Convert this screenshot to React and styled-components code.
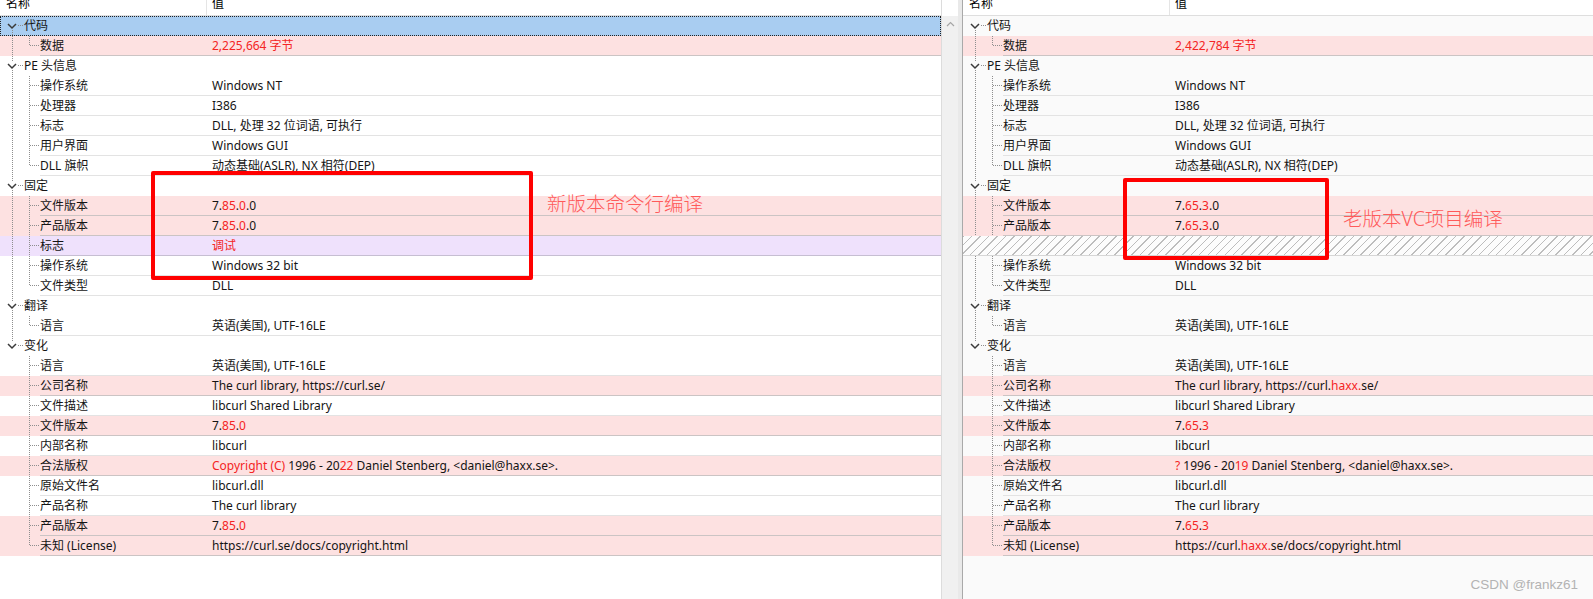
import React from 'react';
import styled, { createGlobalStyle, css } from 'styled-components';

const GlobalStyle = createGlobalStyle`
  html, body {
    margin: 0;
    padding: 0;
    background: #fff;
  }

  body {
    font-family: 'Noto Sans', 'Noto Sans CJK SC', sans-serif;
    font-size: 12px;
    color: #141414;
  }
`;

const RED = '#f42424';

const tones = {
  white: { bg: 'transparent', line: '#e3e3e3' },
  pink: { bg: '#fde1e1', line: '#cbc4c4' },
  purple: { bg: '#efe1fc', line: '#c6bed2' },
  selected: { bg: '#a9cdf1', line: 'transparent' },
};

const Screen = styled.div`
  position: relative;
  display: flex;
  width: 1593px;
  height: 599px;
  overflow: hidden;
`;

const Pane = styled.div`
  display: flex;
  flex-direction: column;
  width: ${p => (p.$width ? `${p.$width}px` : 'auto')};
  flex: ${p => (p.$width ? 'none' : 1)};
  background: ${p => p.$bg};
`;

const Header = styled.div`
  display: flex;
  height: 15px;
  border-bottom: 1px solid #dedede;
  background: #fff;
  overflow: hidden;
`;

const HeaderCell = styled.div`
  display: flex;
  align-items: flex-end;
  box-sizing: border-box;
  width: ${p => (p.$first ? '207px' : 'auto')};
  flex: ${p => (p.$first ? 'none' : 1)};
  padding: 0 0 5px ${p => (p.$first ? '6px' : '5px')};
  border-right: ${p => (p.$first ? '1px solid #e5e5e5' : 'none')};
  line-height: 12px;
  color: #000;
`;

const Row = styled.div`
  display: flex;
  height: 20px;
  background: ${p => tones[p.$tone].bg};
  ${p =>
    p.$tone === 'selected' &&
    css`
      outline: 1px dotted #222;
      outline-offset: -1px;
    `}
`;

const MissingRow = styled.div`
  box-sizing: border-box;
  height: 20px;
  border-bottom: 1px solid #d6d6d6;
  background: repeating-linear-gradient(135deg, #bdbdbd 0 1px, #fcfcfc 1px 6px);
`;

const Gutter = styled.svg`
  display: block;
  flex: none;
`;

const Body = styled.div`
  display: flex;
  flex: 1;
  box-sizing: border-box;
  height: 20px;
  line-height: 19px;
  border-bottom: 1px solid ${p => (p.$group ? 'transparent' : tones[p.$tone].line)};
  white-space: nowrap;
`;

const NameCell = styled.div`
  flex: none;
  width: ${p => p.$width}px;
`;

const ValueCell = styled.div`
  flex: 1;
  padding-left: 5px;
`;

const Hot = styled.span`
  color: ${RED};
`;

const ScrollTrack = styled.div`
  flex: none;
  width: 16px;
  border-left: 1px solid #dcdcdc;
  background: linear-gradient(#fff 0 16px, #f0f0f0 16px);
`;

const ScrollArrow = styled.svg`
  display: block;
  margin: 21px 0 0 4px;
`;

const Splitter = styled.div`
  flex: none;
  width: 4px;
  background: #e9e9e9;
  border-right: 1px solid #a9a9a9;
`;

const RedBox = styled.div`
  position: absolute;
  left: ${p => p.$left}px;
  top: ${p => p.$top}px;
  width: ${p => p.$width}px;
  height: ${p => p.$height}px;
  box-sizing: border-box;
  border: 4px solid #ff0000;
  border-radius: 2px;
`;

const Note = styled.div`
  position: absolute;
  left: ${p => p.$left}px;
  top: ${p => p.$top}px;
  font-size: 19.5px;
  line-height: 22px;
  font-weight: 300;
  color: #ff5a5a;
  white-space: nowrap;
`;

const Watermark = styled.div`
  position: absolute;
  right: 15px;
  bottom: 7px;
  font-family: 'Liberation Sans', Arial, sans-serif;
  font-size: 13.5px;
  color: #b3b3b3;
`;

const leftTree = [
  {
    label: '代码',
    selected: true,
    children: [{ name: '数据', value: '{2,225,664 字节}', tone: 'pink' }],
  },
  {
    label: 'PE 头信息',
    children: [
      { name: '操作系统', value: 'Windows NT' },
      { name: '处理器', value: 'I386' },
      { name: '标志', value: 'DLL, 处理 32 位词语, 可执行' },
      { name: '用户界面', value: 'Windows GUI' },
      { name: 'DLL 旗帜', value: '动态基础(ASLR), NX 相符(DEP)' },
    ],
  },
  {
    label: '固定',
    children: [
      { name: '文件版本', value: '7.{85}.{0}.0', tone: 'pink' },
      { name: '产品版本', value: '7.{85}.{0}.0', tone: 'pink' },
      { name: '标志', value: '{调试}', tone: 'purple' },
      { name: '操作系统', value: 'Windows 32 bit' },
      { name: '文件类型', value: 'DLL' },
    ],
  },
  {
    label: '翻译',
    children: [{ name: '语言', value: '英语(美国), UTF-16LE' }],
  },
  {
    label: '变化',
    children: [
      { name: '语言', value: '英语(美国), UTF-16LE' },
      { name: '公司名称', value: 'The curl library, https://curl.se/', tone: 'pink' },
      { name: '文件描述', value: 'libcurl Shared Library' },
      { name: '文件版本', value: '7.{85}.{0}', tone: 'pink' },
      { name: '内部名称', value: 'libcurl' },
      {
        name: '合法版权',
        value: '{Copyright (C)} 1996 - 20{22} Daniel Stenberg, <daniel@haxx.se>.',
        tone: 'pink',
      },
      { name: '原始文件名', value: 'libcurl.dll' },
      { name: '产品名称', value: 'The curl library' },
      { name: '产品版本', value: '7.{85}.{0}', tone: 'pink' },
      { name: '未知 (License)', value: 'https://curl.se/docs/copyright.html', tone: 'pink' },
    ],
  },
];

const rightTree = [
  {
    label: '代码',
    children: [{ name: '数据', value: '{2,422,784 字节}', tone: 'pink' }],
  },
  leftTree[1],
  {
    label: '固定',
    children: [
      { name: '文件版本', value: '7.{65}.{3}.0', tone: 'pink' },
      { name: '产品版本', value: '7.{65}.{3}.0', tone: 'pink' },
      { missing: true },
      { name: '操作系统', value: 'Windows 32 bit' },
      { name: '文件类型', value: 'DLL' },
    ],
  },
  leftTree[3],
  {
    label: '变化',
    children: [
      { name: '语言', value: '英语(美国), UTF-16LE' },
      { name: '公司名称', value: 'The curl library, https://curl.{haxx.}se/', tone: 'pink' },
      { name: '文件描述', value: 'libcurl Shared Library' },
      { name: '文件版本', value: '7.{65}.{3}', tone: 'pink' },
      { name: '内部名称', value: 'libcurl' },
      {
        name: '合法版权',
        value: '{?} 1996 - 20{19} Daniel Stenberg, <daniel@haxx.se>.',
        tone: 'pink',
      },
      { name: '原始文件名', value: 'libcurl.dll' },
      { name: '产品名称', value: 'The curl library' },
      { name: '产品版本', value: '7.{65}.{3}', tone: 'pink' },
      { name: '未知 (License)', value: 'https://curl.{haxx.}se/docs/copyright.html', tone: 'pink' },
    ],
  },
];

// "{...}" marks the parts that differ (shown red)
const renderValue = text =>
  text.split(/(\{[^}]*\})/).map((part, i) =>
    part.startsWith('{') ? <Hot key={i}>{part.slice(1, -1)}</Hot> : part
  );

const Dots = props => (
  <line {...props} stroke="#8e8e8e" strokeDasharray="1 1" shapeRendering="crispEdges" />
);

const GroupRow = ({ label, first, last, selected }) => (
  <Row $tone={selected ? 'selected' : 'white'}>
    <Gutter width="24" height="20">
      {!first && <Dots x1="12.5" y1="0" x2="12.5" y2="6" />}
      {!last && <Dots x1="12.5" y1="14" x2="12.5" y2="20" />}
      <polyline points="8,8 12,12 16,8" fill="none" stroke="#3a3a3a" strokeWidth="1.5" />
      <Dots x1="18" y1="9.5" x2="24" y2="9.5" />
    </Gutter>
    <Body $group>
      <NameCell $width={183}>{label}</NameCell>
    </Body>
  </Row>
);

const LeafRow = ({ item, lastGroup, lastChild }) => {
  const tone = item.tone || 'white';
  return (
    <Row $tone={tone}>
      <Gutter width="40" height="20">
        {!lastGroup && <Dots x1="12.5" y1="0" x2="12.5" y2="20" />}
        <Dots x1="29.5" y1="0" x2="29.5" y2={lastChild ? 10 : 20} />
        <Dots x1="30" y1="9.5" x2="40" y2="9.5" />
      </Gutter>
      <Body $tone={tone}>
        <NameCell $width={167}>{item.name}</NameCell>
        <ValueCell>{renderValue(item.value)}</ValueCell>
      </Body>
    </Row>
  );
};

const PropertyTree = ({ tree, width, bg }) => (
  <Pane $width={width} $bg={bg}>
    <Header>
      <HeaderCell $first>名称</HeaderCell>
      <HeaderCell>值</HeaderCell>
    </Header>
    {tree.map((group, gi) => {
      const lastGroup = gi === tree.length - 1;
      return (
        <React.Fragment key={gi}>
          <GroupRow label={group.label} first={gi === 0} last={lastGroup} selected={group.selected} />
          {group.children.map((item, ci) =>
            item.missing ? (
              <MissingRow key={ci} />
            ) : (
              <LeafRow
                key={ci}
                item={item}
                lastGroup={lastGroup}
                lastChild={ci === group.children.length - 1}
              />
            )
          )}
        </React.Fragment>
      );
    })}
  </Pane>
);

const App = () => (
  <>
    <GlobalStyle />
    <Screen>
      <PropertyTree tree={leftTree} width={941} bg="#fff" />
      <ScrollTrack>
        <ScrollArrow width="9" height="6">
          <polyline points="1,5 4.5,1.5 8,5" fill="none" stroke="#a6a6a6" strokeWidth="1.2" />
        </ScrollArrow>
      </ScrollTrack>
      <Splitter />
      <PropertyTree tree={rightTree} bg="#fafafa" />

      <RedBox $left={151} $top={171} $width={382} $height={109} />
      <Note $left={547} $top={193}>新版本命令行编译</Note>
      <RedBox $left={1123} $top={178} $width={206} $height={82} />
      <Note $left={1343} $top={208}>老版本VC项目编译</Note>
      <Watermark>CSDN @frankz61</Watermark>
    </Screen>
  </>
);

export default App;
